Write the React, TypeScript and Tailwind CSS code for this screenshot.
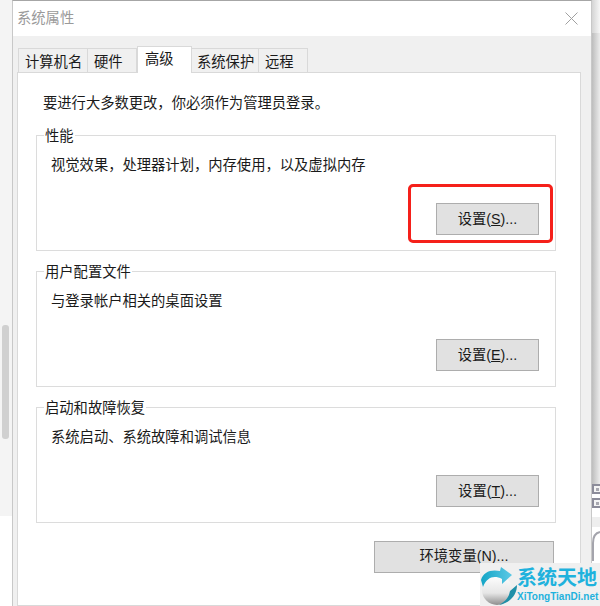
const font = "font-['Liberation_Sans','Noto_Sans_CJK_SC',sans-serif]";

const tabs = [
  { label: "计算机名", width: "w-[70px]", pad: "pl-[6px]" },
  { label: "硬件", width: "w-[50px]", pad: "pl-[6px]" },
  { label: "高级", width: "w-[55px]", pad: "pl-[7px]" },
  { label: "系统保护", width: "w-[68px]", pad: "pl-[5px]" },
  { label: "远程", width: "w-[50px]", pad: "pl-[6px]" },
];

function Tab({ label, width, pad, active }: { label: string; width: string; pad: string; active: boolean }) {
  if (active) {
    return (
      <div className={`relative z-10 h-[27px] ${width} ${pad} border border-b-0 border-[#d9d9d9] bg-white pt-[2px] text-[14.3px] leading-[20px]`}>
        {label}
      </div>
    );
  }
  return (
    <div className={`-ml-px h-[25px] ${width} ${pad} border border-[#d9d9d9] bg-[#f0f0f0] pt-[3px] text-[14.3px] leading-[20px]`}>
      {label}
    </div>
  );
}

function Group({
  title,
  text,
  button,
}: {
  title: string;
  text: string;
  button: React.ReactNode;
}) {
  return (
    <div className="relative flex h-[116px] flex-col border border-[#dcdcdc] pl-[14px] pr-[16px] pt-[19px]">
      <span className="absolute -top-[10px] left-[7px] bg-white px-[1px] text-[14.3px] leading-[20px]">{title}</span>
      <p className="text-[14.3px] leading-[20px]">{text}</p>
      <div className="mb-[15px] mt-auto self-end">
        <button className="h-[32px] w-[103px] border border-[#adadad] bg-[#e1e1e1] pt-[1px] text-[14.3px]">{button}</button>
      </div>
    </div>
  );
}

function WindowIcon() {
  return (
    <div className="flex h-[10px] w-[8px] items-center justify-center border-2 border-r-0 border-[#8c8c9a] bg-[#f4f4f4]">
      <div className="h-[3px] w-[3px] bg-[#a8a8b0]" />
    </div>
  );
}

function Logo() {
  return (
    <svg width="37" height="41" viewBox="0 0 37 41" className="shrink-0">
      <defs>
        <linearGradient id="ball" x1="0" y1="0" x2="0" y2="1">
          <stop offset="0" stopColor="#ffffff" />
          <stop offset="0.6" stopColor="#e6e6e6" />
          <stop offset="1" stopColor="#8e8e8e" />
        </linearGradient>
        <linearGradient id="arrow" x1="0" y1="0" x2="1" y2="0">
          <stop offset="0" stopColor="#14a5c6" />
          <stop offset="1" stopColor="#5cc9e6" />
        </linearGradient>
      </defs>
      <circle cx="17" cy="25" r="15" fill="url(#ball)" />
      <path d="M1 15C3 7 11 4 20 6L21 2 32 10 22 19V14C14 10 7 12 3 22Z" fill="url(#arrow)" />
      <path d="M37 20C37 30 30 38 19 40 26 36 29 32 30 26Z" fill="#1f8fa8" />
    </svg>
  );
}

export default function App() {
  return (
    <div className={`${font} relative flex h-[606px] w-[600px] overflow-hidden bg-white text-[#1a1a1a]`}>
      {/* page behind the dialog */}
      <div className="h-full w-[12px] shrink-0">
        <div className="h-[516px] bg-[#f4f4f4] pl-[2px] pt-[325px]">
          <div className="h-[114px] w-[7px] rounded-[3px] bg-[#d0d0d0]" />
        </div>
      </div>
      <div className="flex h-full w-[580px] shrink-0 flex-col border-x border-t border-[#c8c8c8] border-t-[#a6a6a6] bg-[#f0f0f0]">
        <div className="flex h-[35px] shrink-0 items-center justify-between bg-white pl-[4px] pr-[13px]">
          <span className="text-[14.3px] text-[#9a9a9a]">系统属性</span>
          <svg width="13" height="13" viewBox="0 0 13 13" stroke="#a0a0a0" fill="none">
            <path d="M.5.5 12.5 12.5M12.5.5.5 12.5" />
          </svg>
        </div>
        <div className="flex grow flex-col pl-[4px] pr-[10px] pt-[10px]">
          <div className="flex h-[27px] items-end pl-[2px]">
            {tabs.map((t) => (
              <Tab key={t.label} label={t.label} width={t.width} pad={t.pad} active={t.label === "高级"} />
            ))}
          </div>
          <div className="-mt-px flex grow flex-col border border-[#d9d9d9] bg-white pl-[18px] pr-[24px]">
            <p className="mt-[20px] pl-[7px] text-[14.3px] leading-[20px]">要进行大多数更改，你必须作为管理员登录。</p>
            <div className="mt-[22px] flex flex-col gap-[20px]">
              <Group title="性能" text="视觉效果，处理器计划，内存使用，以及虚拟内存" button={<>设置(<u>S</u>)...</>} />
              <Group title="用户配置文件" text="与登录帐户相关的桌面设置" button={<>设置(<u>E</u>)...</>} />
              <Group title="启动和故障恢复" text="系统启动、系统故障和调试信息" button={<>设置(<u>T</u>)...</>} />
            </div>
            <div className="mt-[18px] flex justify-end pr-[2px]">
              <button className="h-[32px] w-[180px] border border-[#adadad] bg-[#e1e1e1] text-[14.3px]">环境变量(N)...</button>
            </div>
          </div>
        </div>
      </div>
      {/* page behind the dialog, right side */}
      <div className="flex h-full w-[8px] shrink-0 flex-col">
        <div className="h-[33px] bg-gradient-to-r from-[#d4d4d4] to-[#f6f6f6]" />
        <div className="flex h-[451px] bg-gradient-to-r from-[#bdbdbd] to-[#ececec]" />
        <div className="flex flex-col gap-[4px]">
          <WindowIcon />
          <WindowIcon />
        </div>
        <div className="h-[9px]" />
        <div className="h-[10px] bg-[#eeeeee]" />
        <svg width="8" height="30" viewBox="0 0 8 30" fill="none" stroke="#a4a4ac" strokeWidth="2" className="mt-[4px]">
          <path d="M8 1C3 2 1 6 1 12V30" />
        </svg>
      </div>
      {/* red annotation box */}
      <div className="absolute left-[408px] top-[184px] h-[59px] w-[145px] rounded-[5px] border-[3px] border-[#f5201a]" />
      {/* watermark */}
      <div className="absolute left-[480px] top-[563px] flex h-[43px] w-[120px] items-end bg-[#f0f0f0]">
        <Logo />
        <div className="flex flex-col">
          <span className="text-[20px] font-bold leading-[24px] text-[#1fb2dd]">系统天地</span>
          <span className="mb-[3px] mt-[1px] text-[10px] font-bold leading-[12px] text-[#1fb2dd]">XiTongTianDi.net</span>
        </div>
      </div>
    </div>
  );
}
